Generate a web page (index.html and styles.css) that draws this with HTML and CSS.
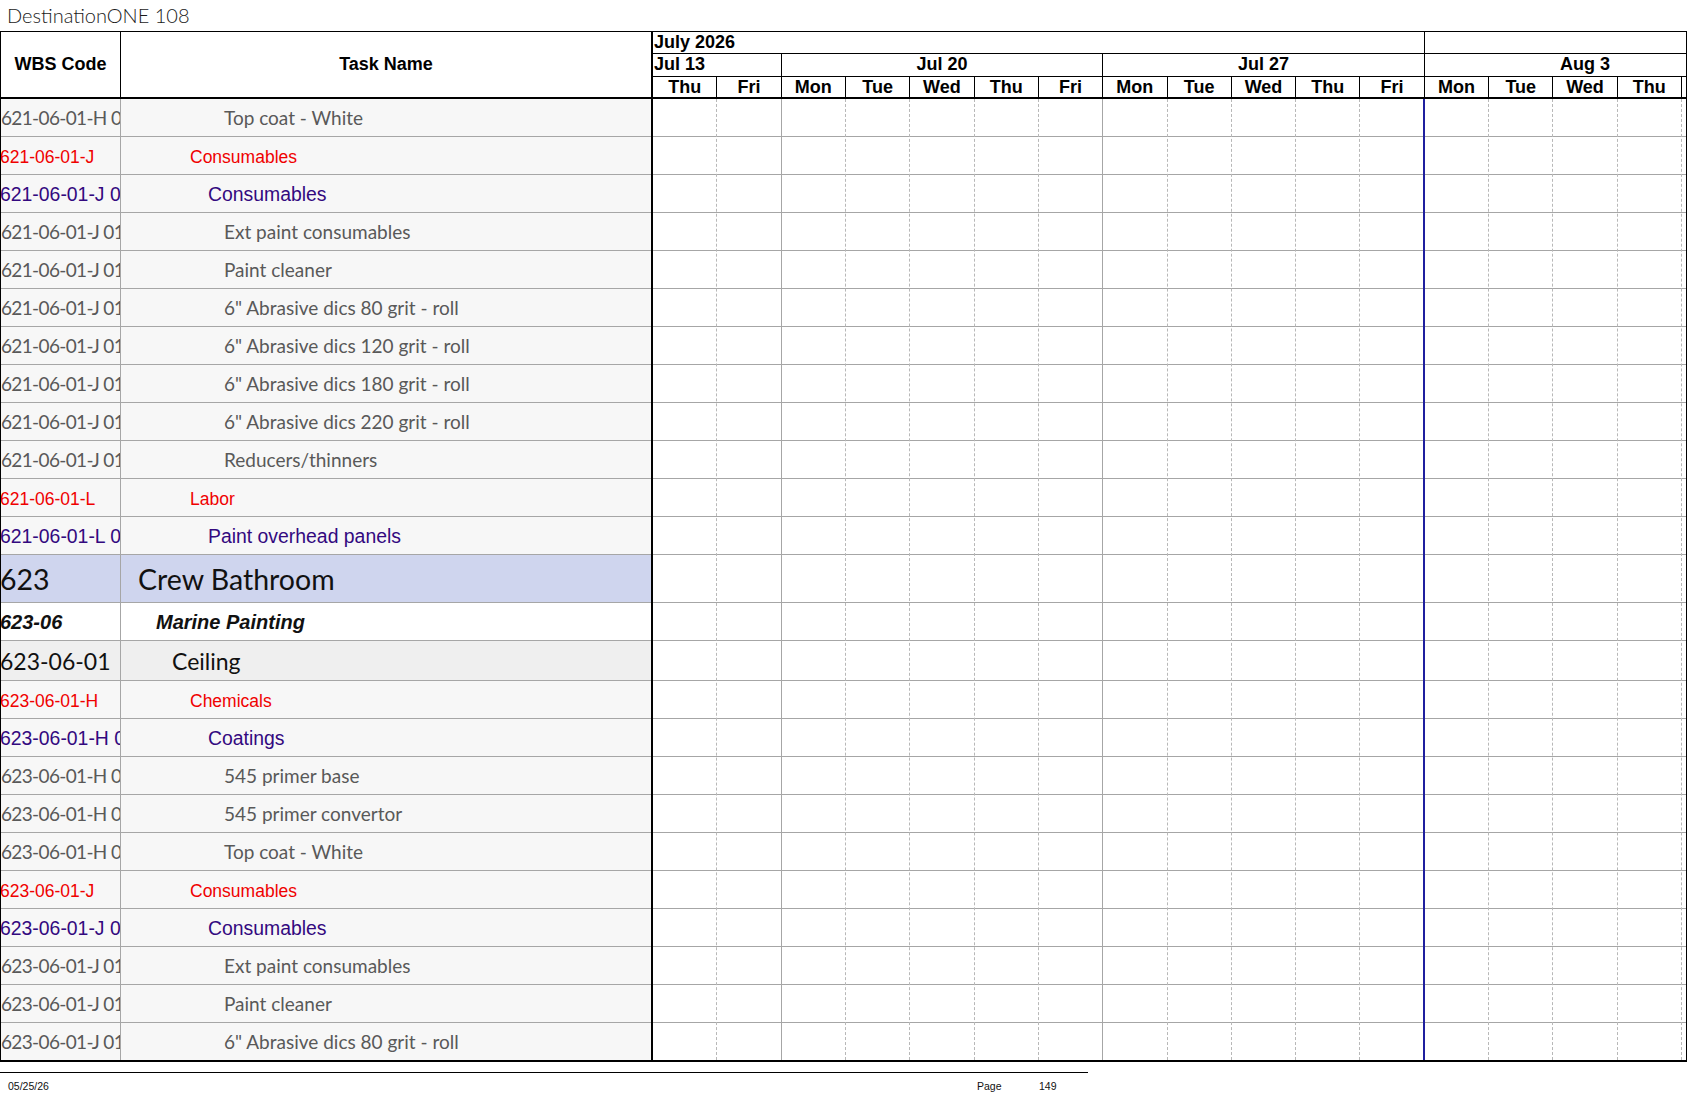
FILE: index.html
```html
<!DOCTYPE html>
<html>
<head>
<meta charset="utf-8">
<title>DestinationONE 108</title>
<link rel="stylesheet" href="styles.css">
</head>
<body>
<div class="title">DestinationONE 108</div>
<div class="sheet">
  <div class="head">
    <div class="h-wbs">WBS Code</div>
    <div class="h-task">Task Name</div>
    <div class="h-gantt">
      <div class="tier months">
        <div class="cell d12 left">July 2026</div>
        <div class="cell d5"></div>
      </div>
      <div class="tier weeks">
        <div class="cell d2 left">Jul 13</div>
        <div class="cell d5">Jul 20</div>
        <div class="cell d5">Jul 27</div>
        <div class="cell d5">Aug 3</div>
      </div>
      <div class="tier days">
        <div class="cell d1">Thu</div><div class="cell d1">Fri</div>
        <div class="cell d1">Mon</div><div class="cell d1">Tue</div><div class="cell d1">Wed</div><div class="cell d1">Thu</div><div class="cell d1">Fri</div>
        <div class="cell d1">Mon</div><div class="cell d1">Tue</div><div class="cell d1">Wed</div><div class="cell d1">Thu</div><div class="cell d1">Fri</div>
        <div class="cell d1">Mon</div><div class="cell d1">Tue</div><div class="cell d1">Wed</div><div class="cell d1">Thu</div><div class="cell d1">Fri</div>
      </div>
    </div>
  </div>
  <div class="body">
    <div class="row leaf"><div class="wbs">621-06-01-H 01.003</div><div class="task">Top coat - White</div><div class="gc"></div></div>
    <div class="row red"><div class="wbs">621-06-01-J</div><div class="task">Consumables</div><div class="gc"></div></div>
    <div class="row pur"><div class="wbs">621-06-01-J 01</div><div class="task">Consumables</div><div class="gc"></div></div>
    <div class="row leaf"><div class="wbs">621-06-01-J 01.001</div><div class="task">Ext paint consumables</div><div class="gc"></div></div>
    <div class="row leaf"><div class="wbs">621-06-01-J 01.002</div><div class="task">Paint cleaner</div><div class="gc"></div></div>
    <div class="row leaf"><div class="wbs">621-06-01-J 01.003</div><div class="task">6" Abrasive dics 80 grit - roll</div><div class="gc"></div></div>
    <div class="row leaf"><div class="wbs">621-06-01-J 01.004</div><div class="task">6" Abrasive dics 120 grit - roll</div><div class="gc"></div></div>
    <div class="row leaf"><div class="wbs">621-06-01-J 01.005</div><div class="task">6" Abrasive dics 180 grit - roll</div><div class="gc"></div></div>
    <div class="row leaf"><div class="wbs">621-06-01-J 01.006</div><div class="task">6" Abrasive dics 220 grit - roll</div><div class="gc"></div></div>
    <div class="row leaf"><div class="wbs">621-06-01-J 01.007</div><div class="task">Reducers/thinners</div><div class="gc"></div></div>
    <div class="row red"><div class="wbs">621-06-01-L</div><div class="task">Labor</div><div class="gc"></div></div>
    <div class="row pur"><div class="wbs">621-06-01-L 01</div><div class="task">Paint overhead panels</div><div class="gc"></div></div>
    <div class="row crew"><div class="wbs">623</div><div class="task">Crew Bathroom</div><div class="gc"></div></div>
    <div class="row mar"><div class="wbs">623-06</div><div class="task">Marine Painting</div><div class="gc"></div></div>
    <div class="row ceil"><div class="wbs">623-06-01</div><div class="task">Ceiling</div><div class="gc"></div></div>
    <div class="row red"><div class="wbs">623-06-01-H</div><div class="task">Chemicals</div><div class="gc"></div></div>
    <div class="row pur"><div class="wbs">623-06-01-H 01</div><div class="task">Coatings</div><div class="gc"></div></div>
    <div class="row leaf"><div class="wbs">623-06-01-H 01.001</div><div class="task">545 primer base</div><div class="gc"></div></div>
    <div class="row leaf"><div class="wbs">623-06-01-H 01.002</div><div class="task">545 primer convertor</div><div class="gc"></div></div>
    <div class="row leaf"><div class="wbs">623-06-01-H 01.003</div><div class="task">Top coat - White</div><div class="gc"></div></div>
    <div class="row red"><div class="wbs">623-06-01-J</div><div class="task">Consumables</div><div class="gc"></div></div>
    <div class="row pur"><div class="wbs">623-06-01-J 01</div><div class="task">Consumables</div><div class="gc"></div></div>
    <div class="row leaf"><div class="wbs">623-06-01-J 01.001</div><div class="task">Ext paint consumables</div><div class="gc"></div></div>
    <div class="row leaf"><div class="wbs">623-06-01-J 01.002</div><div class="task">Paint cleaner</div><div class="gc"></div></div>
    <div class="row leaf"><div class="wbs">623-06-01-J 01.003</div><div class="task">6" Abrasive dics 80 grit - roll</div><div class="gc"></div></div>

    <div class="glines">
      <div class="gl"></div><div class="gl wk"></div>
      <div class="gl"></div><div class="gl"></div><div class="gl"></div><div class="gl"></div><div class="gl wk"></div>
      <div class="gl"></div><div class="gl"></div><div class="gl"></div><div class="gl"></div><div class="gl mo"></div>
      <div class="gl"></div><div class="gl"></div><div class="gl"></div><div class="gl"></div><div class="gl"></div>
    </div>
  </div>
</div>
<div class="footer">
  <div class="f-date">05/25/26</div>
  <div class="f-page">Page</div>
  <div class="f-num">149</div>
</div>
</body>
</html>
```
FILE: styles.css
```css
* { box-sizing: border-box; }

body {
  margin: 0;
  background: #ffffff;
  font-family: "Liberation Sans", Arial, sans-serif;
  color: #000;
}

.title {
  height: 31px;
  padding-left: 7px;
  font-family: Lato, "Open Sans", sans-serif;
  font-weight: 300;
  font-size: 20px;
  line-height: 30px;
  color: #1a1a1a;
}

.sheet {
  width: 1687px;
  border: 1px solid #000;
  border-bottom-width: 2px;
}

/* ---------- header ---------- */
.head {
  display: flex;
  height: 67px;
  border-bottom: 2px solid #000;
}

.h-wbs, .h-task {
  display: flex;
  align-items: center;
  justify-content: center;
  font-weight: bold;
  font-size: 18px;
}

.h-wbs {
  width: 120px;
  border-right: 1px solid #000;
}

.h-task {
  width: 532px;
  border-right: 2px solid #000;
}

.h-gantt {
  width: 1033px;
  overflow: hidden;
}

.tier {
  display: flex;
  white-space: nowrap;
}

.months { height: 22px; border-bottom: 1px solid #000; }
.weeks  { height: 23px; border-bottom: 1px solid #000; }
.days   { height: 20px; }

.cell {
  flex: none;
  border-right: 1px solid #000;
  font-weight: bold;
  font-size: 18px;
  line-height: 20px;
  text-align: center;
  overflow: hidden;
}

.cell.left { text-align: left; padding-left: 1px; }

.d1  { width: 64.3125px; }
.d2  { width: 128.625px; }
.d5  { width: 321.5625px; }
.d12 { width: 771.75px; }

/* ---------- body ---------- */
.body {
  position: relative;
}

.row {
  display: flex;
  height: 38px;
  border-bottom: 1px solid #a6a6a6;
}

.row:nth-last-child(2) {
  height: 37px;
  border-bottom: none;
}

.wbs {
  width: 120px;
  flex: none;
  border-right: 1px solid #a6a6a6;
  display: flex;
  align-items: center;
  white-space: nowrap;
  overflow: hidden;
  text-indent: -1px;
}

.task {
  width: 532px;
  flex: none;
  display: flex;
  align-items: center;
  white-space: nowrap;
  overflow: hidden;
}

.gc {
  flex: 1;
  background: #ffffff;
}

/* leaf rows */
.leaf .wbs, .leaf .task,
.red .wbs, .red .task,
.pur .wbs, .pur .task {
  background: #f7f7f7;
}

.leaf {
  color: #595959;
  font-family: Lato, "Open Sans", sans-serif;
  font-size: 19px;
}
.leaf .wbs { letter-spacing: -0.65px; text-indent: 0; }
.leaf .task { padding-left: 103px; }

.red {
  color: #f00000;
  font-size: 17.5px;
}
.red .wbs, .red .task { padding-top: 3px; }
.red .task { padding-left: 69px; }

.pur {
  color: #33097f;
  font-size: 19.4px;
}
.pur .wbs, .pur .task { padding-top: 2px; }
.pur .task { padding-left: 87px; }

.crew {
  height: 48px;
  color: #111;
  font-family: Lato, "Open Sans", sans-serif;
  font-size: 28.5px;
}
.crew .wbs, .crew .task { background: #cfd5ee; }
.crew .task { padding-left: 17px; }

.mar {
  color: #111;
  font-weight: bold;
  font-style: italic;
  font-size: 20px;
}
.mar .wbs, .mar .task { background: #ffffff; padding-top: 2px; }
.mar .task { padding-left: 35px; }

.ceil {
  height: 40px;
  color: #111;
  font-family: Lato, "Open Sans", sans-serif;
  font-size: 23px;
}
.ceil .wbs, .ceil .task { background: #efefef; }
.ceil .task { padding-left: 51px; }

/* gantt grid lines drawn over the rows */
.glines {
  position: absolute;
  top: 0;
  bottom: 0;
  left: 650px;
  width: 1035px;
  border-left: 2px solid #000;
  display: flex;
  overflow: hidden;
  pointer-events: none;
}

.gl {
  flex: none;
  width: 64.3125px;
  border-right: 1px dashed #b8b8b8;
}

.gl.wk { border-right: 1px solid #a6a6a6; }
.gl.mo { border-right: 2px solid #1f1f9e; }

/* ---------- footer ---------- */
.footer {
  margin-top: 10px;
  width: 1088px;
  border-top: 1px solid #000;
  display: grid;
  grid-template-columns: 969px 62px auto;
  padding-left: 8px;
  padding-top: 7px;
  font-family: "Liberation Sans Narrow", "Liberation Sans", Arial, sans-serif;
  font-size: 10.5px;
  color: #111;
}
```
